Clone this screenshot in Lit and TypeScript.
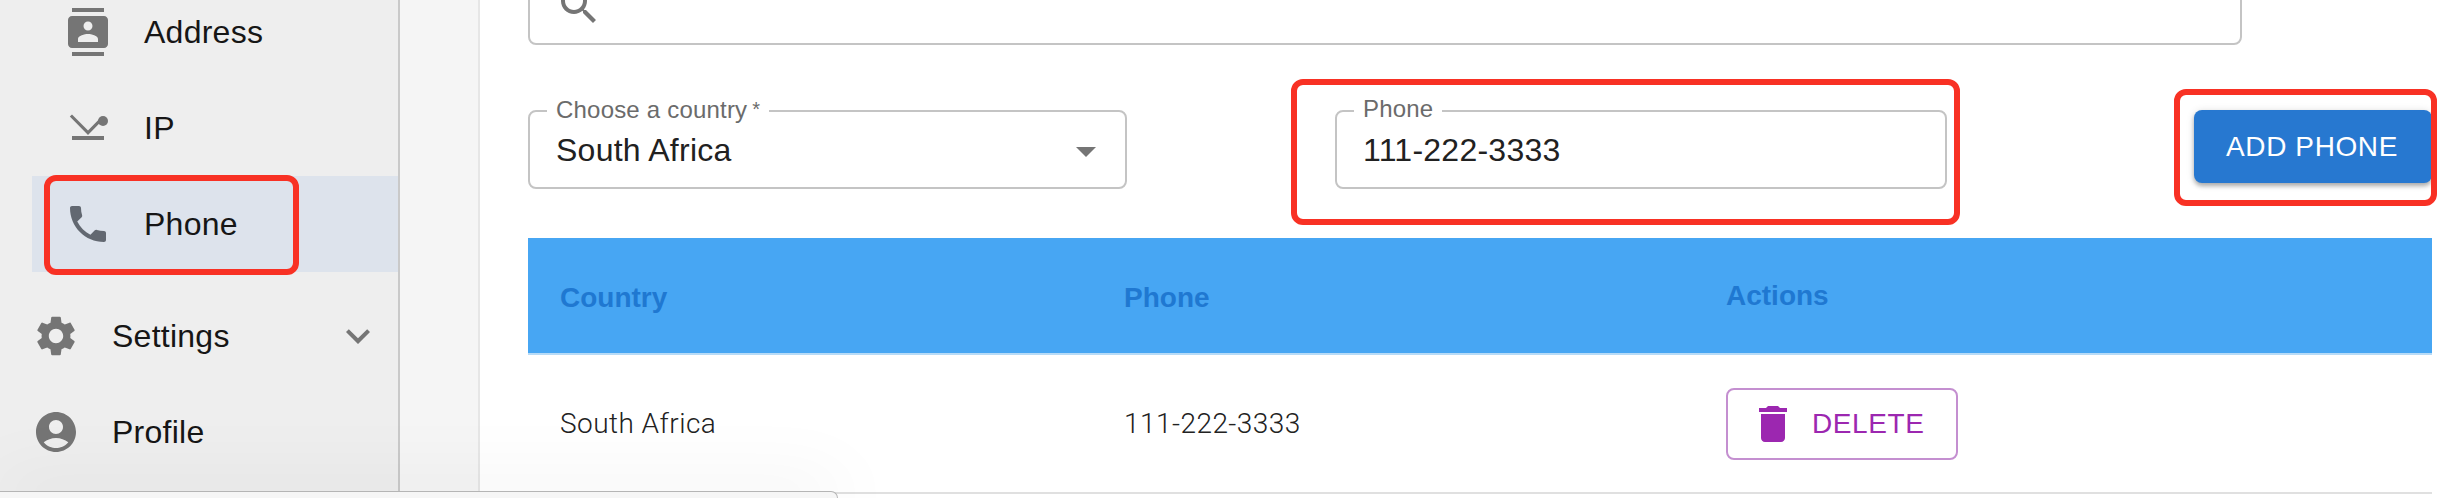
import { LitElement, html, css, svg } from "lit";
import { customElement } from "lit/decorators.js";

const icon = (d: any, cls = "") => html`<svg class="ic ${cls}" viewBox="0 0 24 24" width="48" height="48" aria-hidden="true">${d}</svg>`;

const P = {
  contacts: svg`<path d="M20 0H4v2h16V0zM4 24h16v-2H4v2zM20 4H4c-1.1 0-2 .9-2 2v12c0 1.1.9 2 2 2h16c1.1 0 2-.9 2-2V6c0-1.1-.9-2-2-2zm-8 2.75c1.24 0 2.25 1.01 2.25 2.25s-1.01 2.25-2.25 2.25S9.75 10.24 9.75 9 10.76 6.75 12 6.75zM17 17H7v-1.5c0-1.67 3.33-2.5 5-2.5s5 .83 5 2.5V17z"/>`,
  ip: svg`<path d="M4 16h16v2H4z"/><path d="M2.9 6.3l1.1-1.1 8 8 6-6.1 1.1 1.1L12 15.5z"/><circle cx="19.5" cy="8.5" r="2.5"/>`,
  phone: svg`<path d="M6.62 10.79c1.44 2.83 3.76 5.14 6.59 6.59l2.2-2.2c.27-.27.67-.36 1.02-.24 1.12.37 2.33.57 3.57.57.55 0 1 .45 1 1V20c0 .55-.45 1-1 1-9.39 0-17-7.61-17-17 0-.55.45-1 1-1h3.5c.55 0 1 .45 1 1 0 1.25.2 2.45.57 3.57.11.35.03.74-.25 1.02l-2.2 2.2z"/>`,
  gear: svg`<path d="M19.14 12.94c.04-.3.06-.61.06-.94 0-.32-.02-.64-.07-.94l2.03-1.58c.18-.14.23-.41.12-.61l-1.92-3.32c-.12-.22-.37-.29-.59-.22l-2.39.96c-.5-.38-1.03-.7-1.62-.94l-.36-2.54c-.04-.24-.24-.41-.48-.41h-3.84c-.24 0-.43.17-.47.41l-.36 2.54c-.59.24-1.13.57-1.62.94l-2.39-.96c-.22-.08-.47 0-.59.22L2.74 8.87c-.12.21-.08.47.12.61l2.03 1.58c-.05.3-.09.63-.09.94s.02.64.07.94l-2.03 1.58c-.18.14-.23.41-.12.61l1.92 3.32c.12.22.37.29.59.22l2.39-.96c.5.38 1.03.7 1.62.94l.36 2.54c.05.24.24.41.48.41h3.84c.24 0 .44-.17.47-.41l.36-2.54c.59-.24 1.13-.56 1.62-.94l2.39.96c.22.08.47 0 .59-.22l1.92-3.32c.12-.22.07-.47-.12-.61l-2.01-1.58zM12 15.6c-1.98 0-3.6-1.62-3.6-3.6s1.62-3.6 3.6-3.6 3.6 1.62 3.6 3.6-1.62 3.6-3.6 3.6z"/>`,
  account: svg`<path d="M12 2C6.48 2 2 6.48 2 12s4.48 10 10 10 10-4.48 10-10S17.52 2 12 2zm0 4c1.93 0 3.5 1.57 3.5 3.5S13.93 13 12 13s-3.5-1.57-3.5-3.5S10.07 6 12 6zm0 14c-2.03 0-4.43-.82-6.14-2.88C7.55 15.8 9.68 15 12 15s4.45.8 6.14 2.12C16.43 19.18 14.03 20 12 20z"/>`,
  chevron: svg`<path d="M16.59 8.59 12 13.17 7.41 8.59 6 10l6 6 6-6z"/>`,
  del: svg`<path d="M6 19c0 1.1.9 2 2 2h8c1.1 0 2-.9 2-2V7H6v12zM19 4h-3.5l-1-1h-5l-1 1H5v2h14V4z"/>`,
  arrow: svg`<path d="M7 10l5 5 5-5z"/>`,
  search: svg`<path d="M15.5 14h-.79l-.28-.27C15.41 12.59 16 11.11 16 9.5 16 5.91 13.09 3 9.5 3S3 5.91 3 9.5 5.91 16 9.5 16c1.61 0 3.09-.59 4.23-1.57l.27.28v.79l5 4.99L20.49 19l-4.99-5zm-6 0C7.01 14 5 11.99 5 9.5S7.01 5 9.5 5 14 7.01 14 9.5 11.99 14 9.5 14z"/>`,
};

@customElement("app-root")
export class AppRoot extends LitElement {
  static styles = css`
    :host {
      display: block;
      width: 2456px;
      height: 498px;
      overflow: hidden;
      position: relative;
      background: #fff;
      font-family: "Liberation Sans", Arial, sans-serif;
      color: #161616;
    }
    .page { display: flex; height: 498px; overflow: hidden; }
    .ic { display: block; flex: none; fill: #757575; }

    .sidebar {
      width: 398px;
      flex: none;
      background: #eeeeee;
      border-right: 2px solid #c9c9c9;
      padding-top: 8px;
      display: flex;
      flex-direction: column;
      font-size: 32px;
      line-height: 40px;
      letter-spacing: 0.25px;
    }
    .row { display: flex; align-items: center; height: 96px; flex: none; }
    .sub { padding-left: 64px; gap: 32px; }
    .first { margin-top: -24px; }
    .top { padding-left: 32px; gap: 32px; height: 96px; }
    .sel { margin-left: 32px; padding-left: 32px; background: #dde3ec; position: relative; margin-bottom: 16px; }
    .sel .ic { fill: #626871; }
    .chev { margin-left: auto; margin-right: 16px; }
    .mark {
      position: absolute;
      border: 6px solid #f83124;
      border-radius: 12px;
      box-sizing: border-box;
      pointer-events: none;
    }
    .m-nav { left: 12px; top: -1px; width: 255px; height: 100px; }
    .m-phone { left: -46px; top: -33px; width: 669px; height: 146px; }
    .m-btn { left: -20px; top: -21px; width: 263px; height: 117px; }

    .strip { width: 78px; flex: none; background: #f5f5f5; border-right: 2px solid #e6e6e6; }

    .main { flex: 1; min-width: 0; padding: 0 24px 0 48px; }
    .search {
      height: 78px;
      width: 1714px;
      margin-top: -33px;
      box-sizing: border-box;
      border: 2px solid #c4c4c4;
      border-radius: 8px;
      display: flex;
      align-items: center;
      padding-left: 25px;
    }
    .form { display: flex; align-items: flex-start; margin-top: 65px; }
    .field {
      position: relative;
      height: 79px;
      box-sizing: border-box;
      border: 2px solid #c4c4c4;
      border-radius: 8px;
      display: flex;
      align-items: center;
      padding: 2px 0 0 26px;
      font-size: 32px;
      letter-spacing: 0.25px;
      color: #212121;
    }
    .f-country { width: 599px; padding-right: 15px; justify-content: space-between; }
    .f-phone { width: 612px; margin-left: 208px; }
    .field label {
      position: absolute;
      top: -17px;
      left: 17px;
      padding: 0 9px;
      background: #fff;
      font-size: 24px;
      line-height: 28px;
      letter-spacing: 0.2px;
      color: #6b6b6b;
    }
    .req { font-size: 20px; margin-left: 5px; vertical-align: 2px; }
    .wrap { position: relative; margin-left: 247px; }
    .add {
      display: block;
      box-sizing: border-box;
      width: 238px;
      height: 73px;
      border: 0;
      border-radius: 8px;
      background: #2778d0;
      color: #fff;
      font: 400 28px "Liberation Sans", Arial, sans-serif;
      letter-spacing: 0.6px;
      box-shadow: 0 3px 4px rgba(0,0,0,.28), 0 1px 8px rgba(0,0,0,.12);
      padding: 0 2px 0 0;
    }

    .table { margin-top: 49px; }
    .grid { display: grid; grid-template-columns: 564px 602px 1fr; align-items: center; }
    .grid > div { padding-left: 32px; }
    .thead {
      height: 115px;
      background: #47a6f3;
      border-bottom: 2px solid #b7dbf7;
      font-size: 28px;
      font-weight: 700;
      color: #1f78d1;
    }
    .thead .col { padding-top: 4px; }
    .tbody {
      height: 137px;
      border-bottom: 2px solid #e0e0e0;
      font-family: Roboto, "Liberation Sans", sans-serif;
      font-weight: 300;
      font-size: 28px;
      letter-spacing: 0.45px;
      color: #222;
    }
    .del {
      display: inline-flex;
      align-items: center;
      box-sizing: border-box;
      width: 232px;
      height: 72px;
      padding: 0 0 0 31px;
      gap: 25px;
      border: 2px solid #c48fd0;
      border-radius: 8px;
      background: #fff;
      color: #9c27b0;
      font: 400 28px "Liberation Sans", Arial, sans-serif;
      letter-spacing: 0.6px;
    }
    .del .ic { fill: #9c27b0; width: 28px; height: 36px; }

    .win {
      position: absolute;
      left: 0;
      bottom: 0;
      width: 838px;
      height: 7px;
      box-sizing: border-box;
      background: #f6f6f6;
      border: 1px solid #b5b5b5;
      border-bottom: 0;
      border-left: 0;
      border-top-right-radius: 12px;
      box-shadow: 0 0 70px 4px rgba(0,0,0,.13);
    }
  `;

  render() {
    return html`
      <div class="page">
        <nav class="sidebar">
          <div class="row sub first">${icon(P.contacts)}<span>Address</span></div>
          <div class="row sub">${icon(P.ip)}<span>IP</span></div>
          <div class="row sub sel">
            ${icon(P.phone)}<span>Phone</span>
            <div class="mark m-nav"></div>
          </div>
          <div class="row top">${icon(P.gear)}<span>Settings</span>${icon(P.chevron, "chev")}</div>
          <div class="row top">${icon(P.account)}<span>Profile</span></div>
        </nav>
        <div class="strip"></div>
        <main class="main">
          <div class="search">${icon(P.search)}</div>
          <div class="form">
            <div class="field f-country">
              <label>Choose a country<span class="req">*</span></label>
              <span>South Africa</span>
              ${icon(P.arrow)}
            </div>
            <div class="field f-phone">
              <label>Phone</label>
              <span>111-222-3333</span>
              <div class="mark m-phone"></div>
            </div>
            <div class="wrap">
              <button class="add">ADD PHONE</button>
              <div class="mark m-btn"></div>
            </div>
          </div>
          <div class="table">
            <div class="grid thead">
              <div class="col">Country</div><div class="col">Phone</div><div>Actions</div>
            </div>
            <div class="grid tbody">
              <div>South Africa</div><div>111-222-3333</div>
              <div><button class="del"><svg class="ic" viewBox="5 3 14 18" aria-hidden="true">${P.del}</svg>DELETE</button></div>
            </div>
          </div>
        </main>
      </div>
      <div class="win"></div>
    `;
  }
}
